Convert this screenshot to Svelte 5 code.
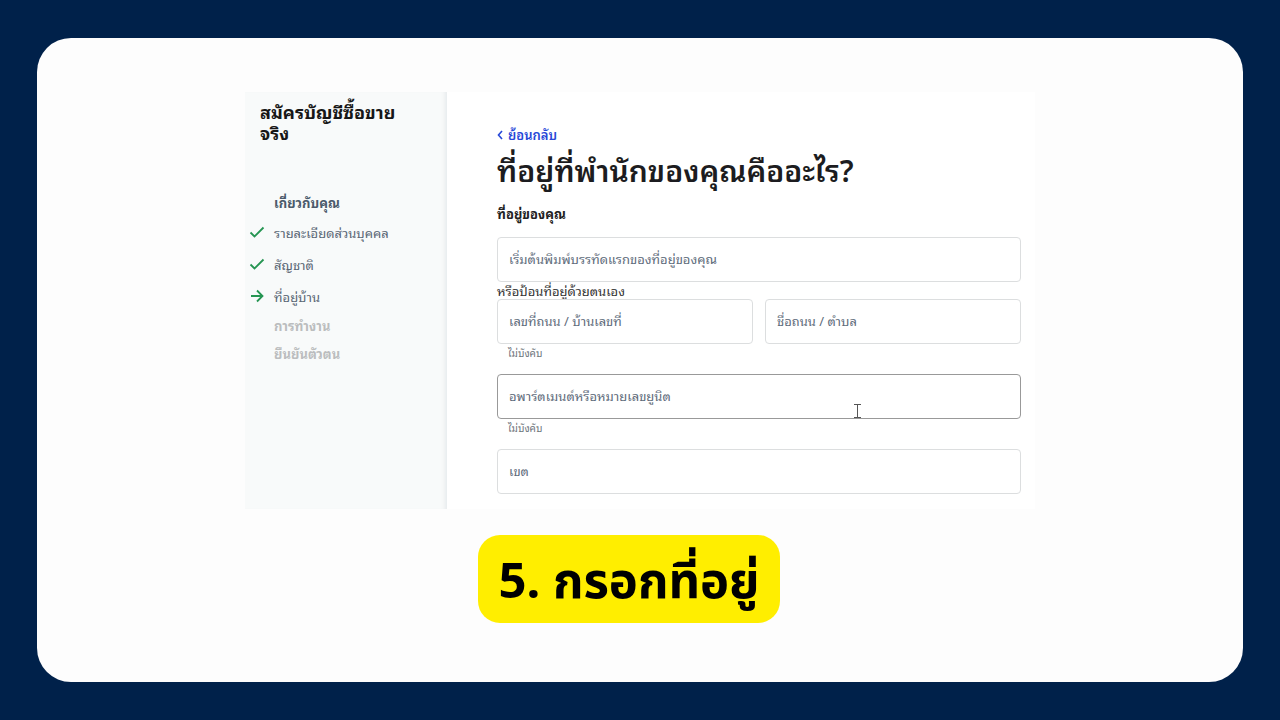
<script lang="ts">
  interface Step {
    label: string
    state: 'done' | 'current'
  }

  const steps: Step[] = [
    { label: 'รายละเอียดส่วนบุคคล', state: 'done' },
    { label: 'สัญชาติ', state: 'done' },
    { label: 'ที่อยู่บ้าน', state: 'current' },
  ]

  let address = $state({ search: '', number: '', street: '', unit: '', district: '' })
</script>

<div class="slide">
  <main class="panel">
    <div class="app">
      <aside>
        <h2>สมัครบัญชีซื้อขายจริง</h2>
        <nav>
          <h3 class="active">เกี่ยวกับคุณ</h3>
          <ul>
            {#each steps as step}
              <li>
                <svg width="16" height="16" viewBox="0 0 16 16" fill="none" stroke="#259552" stroke-width="1.8">
                  {#if step.state === 'done'}
                    <path d="M1.500 8.500 5.500 12.500 14.500 3.500" />
                  {:else}
                    <path d="M2 8h11.500M8 2.500 13.500 8 8 13.500" />
                  {/if}
                </svg>
                <a href="#step">{step.label}</a>
              </li>
            {/each}
          </ul>
          <h3>การทำงาน</h3>
          <h3>ยืนยันตัวตน</h3>
        </nav>
      </aside>

      <section class="content">
        <a class="back" href="#back">
          <svg width="7" height="10" viewBox="0 0 7 10" fill="none" stroke="currentColor" stroke-width="1.6">
            <path d="M5 1 1.500 5 5 9" />
          </svg>
          ย้อนกลับ
        </a>
        <h1>ที่อยู่ที่พำนักของคุณคืออะไร?</h1>
        <form>
          <label class="title" for="search">ที่อยู่ของคุณ</label>
          <input id="search" type="text" placeholder="เริ่มต้นพิมพ์บรรทัดแรกของที่อยู่ของคุณ" bind:value={address.search} />
          <p class="manual">หรือป้อนที่อยู่ด้วยตนเอง</p>
          <div class="row">
            <div class="field">
              <input type="text" aria-label="เลขที่ถนน / บ้านเลขที่" placeholder="เลขที่ถนน / บ้านเลขที่" bind:value={address.number} />
              <small>ไม่บังคับ</small>
            </div>
            <div class="field">
              <input type="text" aria-label="ชื่อถนน / ตำบล" placeholder="ชื่อถนน / ตำบล" bind:value={address.street} />
            </div>
          </div>
          <div class="field">
            <input class="hovered" type="text" aria-label="อพาร์ตเมนต์หรือหมายเลขยูนิต" placeholder="อพาร์ตเมนต์หรือหมายเลขยูนิต" bind:value={address.unit} />
            <small>ไม่บังคับ</small>
            <svg class="cursor" width="9" height="14" viewBox="0 0 9 14" fill="none" stroke="#555">
              <path d="M1 .5h7M4.500 .5v13M1 13.500h7" />
            </svg>
          </div>
          <input type="text" aria-label="เขต" placeholder="เขต" bind:value={address.district} />
        </form>
      </section>
    </div>

    <p class="caption">5. กรอกที่อยู่</p>
  </main>
</div>

<style>
  :global(body) {
    margin: 0;
    background: #00214a;
  }
  .slide {
    box-sizing: border-box;
    min-height: 100vh;
    display: flex;
    padding: 38px 37px;
    background: #00214a;
    font-family: "Noto Sans", "Noto Sans Thai", "DejaVu Sans", sans-serif;
  }
  .panel {
    box-sizing: border-box;
    flex: 1;
    display: flex;
    flex-direction: column;
    align-items: center;
    padding-top: 54px;
    border-radius: 34px;
    background: #fdfdfd;
  }
  .app {
    display: grid;
    grid-template-columns: 202px 1fr;
    width: 65.5%;
    background: #fff;
    font-family: Tahoma, "Noto Sans Thai Looped", Loma, "Noto Sans", sans-serif;
  }
  aside {
    box-sizing: border-box;
    padding: 9px 4px;
    background: #f8fafa;
    box-shadow: inset -5px 0 4px -3px #e6eaec;
  }
  h1,
  h2,
  h3,
  p,
  ul {
    margin: 0;
    padding: 0;
  }
  h2 {
    max-width: 144px;
    margin-left: 11px;
    font-size: 18px;
    line-height: 21px;
    color: #171717;
  }
  nav {
    margin-top: 50px;
  }
  h3 {
    margin-left: 25px;
    font-size: 13px;
    line-height: 28px;
    color: #bbbdbe;
  }
  .active {
    line-height: 20px;
    color: #4b5a6b;
  }
  ul {
    margin: 3px 0 0;
    list-style: none;
  }
  li {
    display: flex;
    align-items: center;
    gap: 9px;
    height: 32px;
    font-size: 13px;
  }
  li a {
    color: #5a6775;
    text-decoration: none;
  }
  .content {
    padding: 34px 14px 15px 50px;
  }
  .back {
    display: flex;
    align-items: center;
    gap: 4px;
    font-size: 13px;
    font-weight: 600;
    line-height: 18px;
    color: #2748d8;
    text-decoration: none;
  }
  h1 {
    margin-top: 5px;
    font-size: 30px;
    font-weight: 600;
    line-height: 40px;
    color: #1c1c20;
    white-space: nowrap;
  }
  form {
    display: flex;
    flex-direction: column;
  }
  .title {
    margin: 15px 0 13px;
    font-size: 13px;
    font-weight: 700;
    line-height: 20px;
    color: #222;
  }
  input {
    box-sizing: border-box;
    width: 100%;
    height: 45px;
    padding: 0 11px 2px;
    border: 1px solid #dcdedf;
    border-radius: 4px;
    background: #fff;
    font: inherit;
    font-size: 13px;
    color: #333;
  }
  input::placeholder {
    color: #5f6d7c;
    opacity: 1;
  }
  .hovered {
    border-color: #999;
  }
  .manual {
    font-size: 13px;
    line-height: 17px;
    color: #333;
  }
  .row {
    display: grid;
    grid-template-columns: 1fr 1fr;
    gap: 12px;
  }
  .field {
    position: relative;
    display: flex;
    flex-direction: column;
  }
  small {
    padding: 0 11px 12px;
    font-size: 10px;
    line-height: 18px;
    color: #6e747b;
  }
  .cursor {
    position: absolute;
    top: 30px;
    left: 68%;
  }
  .caption {
    margin-top: 26px;
    margin-right: 22px;
    padding: 0 20px;
    border-radius: 22px;
    background: #ffee00;
    font-size: 49px;
    font-weight: 700;
    line-height: 88px;
    color: #000;
  }
</style>
